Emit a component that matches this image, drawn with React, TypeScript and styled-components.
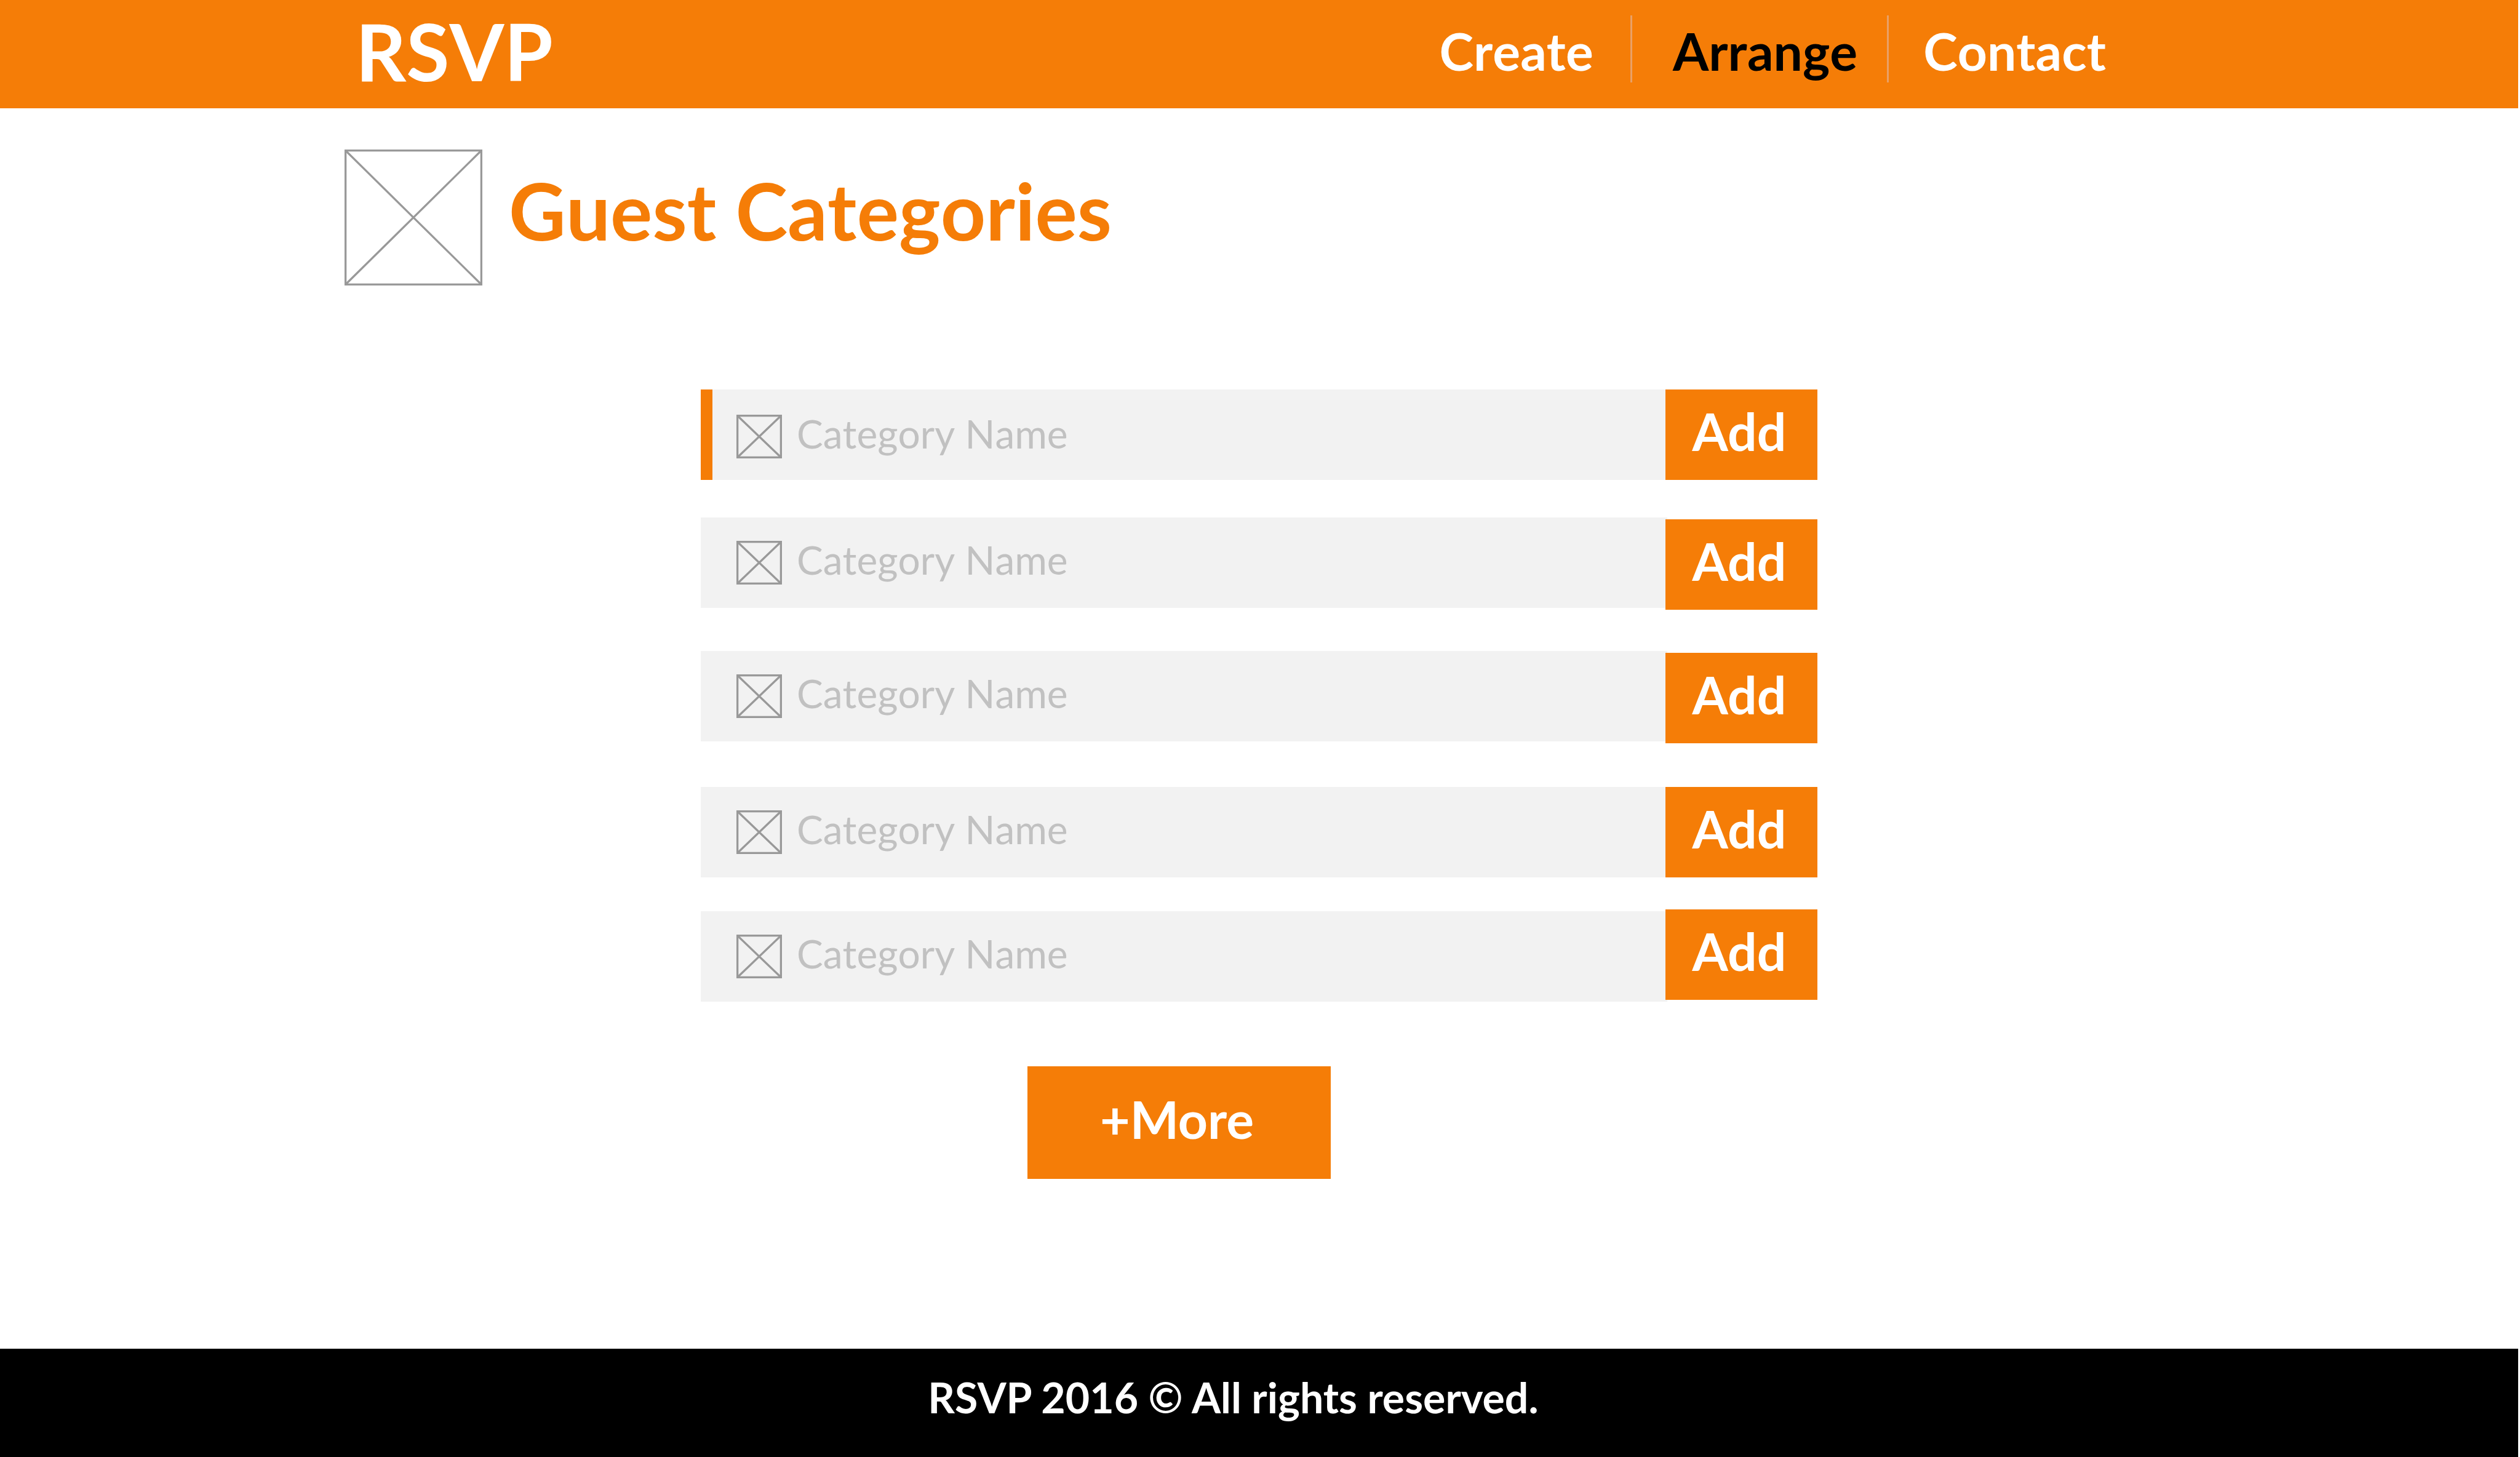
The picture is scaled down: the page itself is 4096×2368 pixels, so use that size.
import React from "react";
import styled, { createGlobalStyle } from "styled-components";

const orange = "#f57d07";

const GlobalStyle = createGlobalStyle`
  *, *::before, *::after { box-sizing: border-box; }
  body {
    margin: 0;
    background: #ffffff;
    font-family: Lato, "Open Sans", sans-serif;
    font-kerning: none;
  }
`;

const Page = styled.div`
  display: flex;
  flex-direction: column;
  min-height: 100vh;
  padding-right: 3px;
`;

const Header = styled.header`
  padding: 25px 0 35px;
  background: ${orange};
`;

const HeaderInner = styled.div`
  display: flex;
  justify-content: space-between;
  align-items: flex-start;
  width: 100%;
  max-width: 2973px;
  margin: 0 auto;
  padding: 0 110px 0 18px;
`;

const Logo = styled.a`
  color: #ffffff;
  font-size: 128px;
  font-weight: 700;
  line-height: 116px;
  text-decoration: none;
`;

const NavList = styled.ul`
  display: flex;
  margin: 0;
  padding: 0;
  list-style: none;
`;

const NavItem = styled.li`
  height: 109px;
  padding: 0 48px 0 66px;
  line-height: 116px;

  & + & {
    border-left: 3px solid #e9a066;
  }

  &:first-child {
    padding: 0 60px 0 0;
  }

  &:last-child {
    padding: 0 0 0 56px;
  }
`;

const NavLink = styled.a<{ $current?: boolean }>`
  color: ${(p) => (p.$current ? "#000000" : "#ffffff")};
  font-size: 84px;
  font-weight: 700;
  text-decoration: none;
`;

const Main = styled.main`
  width: 100%;
  max-width: 2973px;
  margin: 0 auto;
  padding: 67px 0 100px;
`;

const TitleBar = styled.div`
  display: flex;
  align-items: center;
  gap: 43px;
`;

const Title = styled.h1`
  margin: 0;
  padding-bottom: 24px;
  color: ${orange};
  font-size: 128px;
  font-weight: 700;
  line-height: 154px;
`;

const Form = styled.form`
  display: flex;
  flex-direction: column;
  width: 100%;
  max-width: 2394px;
  margin-top: 169px;
  padding-left: 579px;
`;

type Lead = "level" | "field" | "button";

const Row = styled.div<{ $lead: Lead; $space: number }>`
  display: flex;
  min-height: ${(p) => (p.$lead === "level" ? 147 : 150)}px;
  margin-bottom: ${(p) => p.$space}px;
  width: 100%;
  max-width: 1815px;
`;

const Field = styled.label<{ $lead: Lead; $active?: boolean }>`
  display: flex;
  flex: 1;
  align-items: center;
  align-self: ${(p) => (p.$lead === "button" ? "flex-end" : "flex-start")};
  gap: 24px;
  height: 147px;
  margin-right: -3px;
  padding: ${(p) => (p.$active ? "6px 0 0 39px" : "0 0 0 58px")};
  border-left: ${(p) => (p.$active ? `19px solid ${orange}` : "none")};
  background: #f2f2f2;
`;

const NameInput = styled.input`
  flex: 1;
  min-width: 0;
  padding: 0 0 10px;
  border: 0;
  outline: 0;
  background: transparent;
  color: #333333;
  font: 400 64px/77px Lato, "Open Sans", sans-serif;
  font-kerning: none;

  &::placeholder {
    color: #c1c1c1;
    opacity: 1;
  }
`;

const Button = styled.button`
  padding: 0 7px 12px 0;
  border: 0;
  background: ${orange};
  color: #ffffff;
  font: 700 84px/102px Lato, "Open Sans", sans-serif;
  font-kerning: normal;
  cursor: pointer;
`;

const AddButton = styled(Button)<{ $lead: Lead }>`
  position: relative;
  align-self: ${(p) => (p.$lead === "field" ? "flex-end" : "flex-start")};
  width: 247px;
  height: 147px;
`;

const MoreButton = styled(Button)`
  width: 493px;
  height: 183px;
  margin-left: 531px;
`;

const Footer = styled.footer`
  margin-top: auto;
  padding: 36px 84px 54px 0;
  background: #000000;
  color: #ffffff;
  font-size: 68px;
  font-weight: 700;
  font-kerning: normal;
  line-height: 86px;
  text-align: center;
`;

const Drawing = styled.svg`
  display: block;
  flex: none;
`;

function Placeholder({ width, height }: { width: number; height: number }) {
  return (
    <Drawing width={width} height={height} fill="none" stroke="#999999" strokeWidth={3.3} aria-hidden="true">
      <rect x={1.65} y={1.65} width={width - 3.3} height={height - 3.3} />
      <path d={`M2 2 L${width - 2} ${height - 2} M${width - 2} 2 L2 ${height - 2}`} />
    </Drawing>
  );
}

const rows: { lead: Lead; space: number; active?: boolean }[] = [
  { lead: "level", space: 61, active: true },
  { lead: "field", space: 67 },
  { lead: "field", space: 71 },
  { lead: "level", space: 52 },
  { lead: "button", space: 105 },
];

export default function App() {
  return (
    <Page>
      <GlobalStyle />
      <Header>
        <HeaderInner>
          <Logo href="#">RSVP</Logo>
          <nav>
            <NavList>
              <NavItem><NavLink href="#create">Create</NavLink></NavItem>
              <NavItem><NavLink href="#arrange" $current aria-current="page">Arrange</NavLink></NavItem>
              <NavItem><NavLink href="#contact">Contact</NavLink></NavItem>
            </NavList>
          </nav>
        </HeaderInner>
      </Header>
      <Main>
        <TitleBar>
          <Placeholder width={224} height={221} />
          <Title>Guest Categories</Title>
        </TitleBar>
        <Form onSubmit={(e) => e.preventDefault()}>
          {rows.map((row, i) => (
            <Row key={i} $lead={row.lead} $space={row.space}>
              <Field $lead={row.lead} $active={row.active}>
                <Placeholder width={74} height={71} />
                <NameInput type="text" placeholder="Category Name" aria-label={`Category name ${i + 1}`} />
              </Field>
              <AddButton type="button" $lead={row.lead}>Add</AddButton>
            </Row>
          ))}
          <MoreButton type="button">+More</MoreButton>
        </Form>
      </Main>
      <Footer>RSVP 2016 © All rights reserved.</Footer>
    </Page>
  );
}
